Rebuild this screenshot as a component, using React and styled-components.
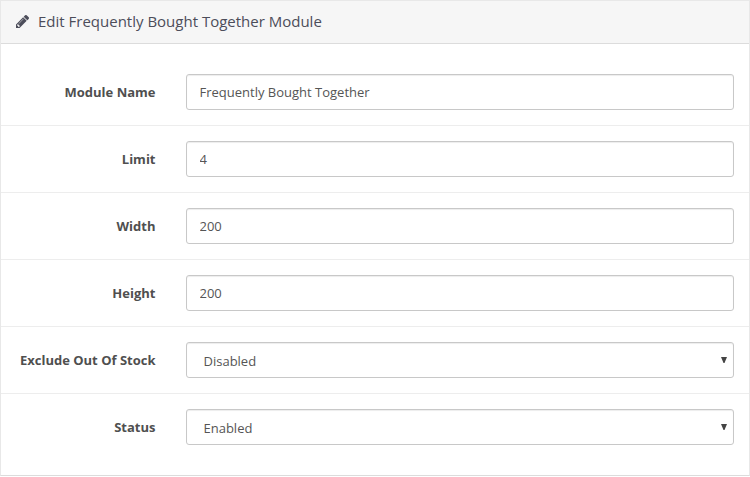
import React from 'react';
import styled, { createGlobalStyle } from 'styled-components';

const GlobalStyle = createGlobalStyle`
  * {
    box-sizing: border-box;
  }

  body {
    margin: 0;
    background-color: #fff;
    color: #4c4d5a;
    font-family: 'Open Sans', sans-serif;
    font-size: 13px;
    line-height: 18px;
  }
`;

const Panel = styled.div`
  height: 476px;
  border: 1px solid #e8e8e8;
  border-bottom-color: #dcdcdc;
`;

const PanelHeading = styled.div`
  display: flex;
  align-items: center;
  height: 43px;
  padding: 0 15px 2px;
  background-color: #f6f6f6;
  border-bottom: 1px solid #dcdcdc;
`;

const PencilIcon = styled.svg`
  width: 13px;
  height: 13px;
  margin-right: 9px;
  fill: #4c4d5a;
`;

const PanelTitle = styled.h3`
  margin: 0;
  font-size: 15px;
  font-weight: 400;
  line-height: 20px;
  color: #4c4d5a;
`;

const Form = styled.form`
  padding: 14px 0 15px;
`;

const FormGroup = styled.div`
  display: flex;
  align-items: center;
  height: 67px;
  padding: 0 15px;

  & + & {
    border-top: 1px solid #ededed;
  }
`;

const Label = styled.label`
  width: 139.5px;
  margin-right: 30.5px;
  color: #4f4f4f;
  font-weight: 700;
  text-align: right;
`;

const Control = styled.input`
  flex: 1;
  min-width: 0;
  height: 36px;
  padding: 8px 12.5px;
  border: 1px solid #c8c8c8;
  border-radius: 3px;
  background-color: #fff;
  box-shadow: inset 0 1px 1px rgba(0, 0, 0, 0.075);
  color: #555;
  font: inherit;
`;

const SelectBox = styled(Control).attrs({ as: 'div' })`
  display: flex;
  align-items: center;
  justify-content: space-between;
  padding: 2px 6px 0 16.5px;
`;

const Arrow = styled.svg`
  width: 6px;
  height: 6px;
  margin-bottom: 2px;
  fill: #444;
`;

const fields = [
  { label: 'Module Name', value: 'Frequently Bought Together' },
  { label: 'Limit', value: '4' },
  { label: 'Width', value: '200' },
  { label: 'Height', value: '200' },
  { label: 'Exclude Out Of Stock', value: 'Disabled', select: true },
  { label: 'Status', value: 'Enabled', select: true },
];

const App = () => {
  return (
    <>
      <GlobalStyle />
      <Panel>
        <PanelHeading>
          <PencilIcon viewBox="128 149 1515 1515">
            <path d="M491 1536l91-91-235-235-91 91v107h128v128h107zm523-928q0-22-22-22-10 0-17 7l-542 542q-7 7-7 17 0 22 22 22 10 0 17-7l542-542q7-7 7-17zm-54-192l416 416-832 832h-416v-416zm683 96q0 53-37 90l-166 166-416-416 166-165q36-38 90-38 53 0 91 38l235 234q37 39 37 91z" />
          </PencilIcon>
          <PanelTitle>Edit Frequently Bought Together Module</PanelTitle>
        </PanelHeading>
        <Form>
          {fields.map(({ label, value, select }) => (
            <FormGroup key={label}>
              <Label>{label}</Label>
              {select ? (
                <SelectBox>
                  {value}
                  <Arrow viewBox="0 0 6 6">
                    <path d="M0 0h6L3.5 6h-1z" />
                  </Arrow>
                </SelectBox>
              ) : (
                <Control type="text" defaultValue={value} />
              )}
            </FormGroup>
          ))}
        </Form>
      </Panel>
    </>
  );
};

export default App;
